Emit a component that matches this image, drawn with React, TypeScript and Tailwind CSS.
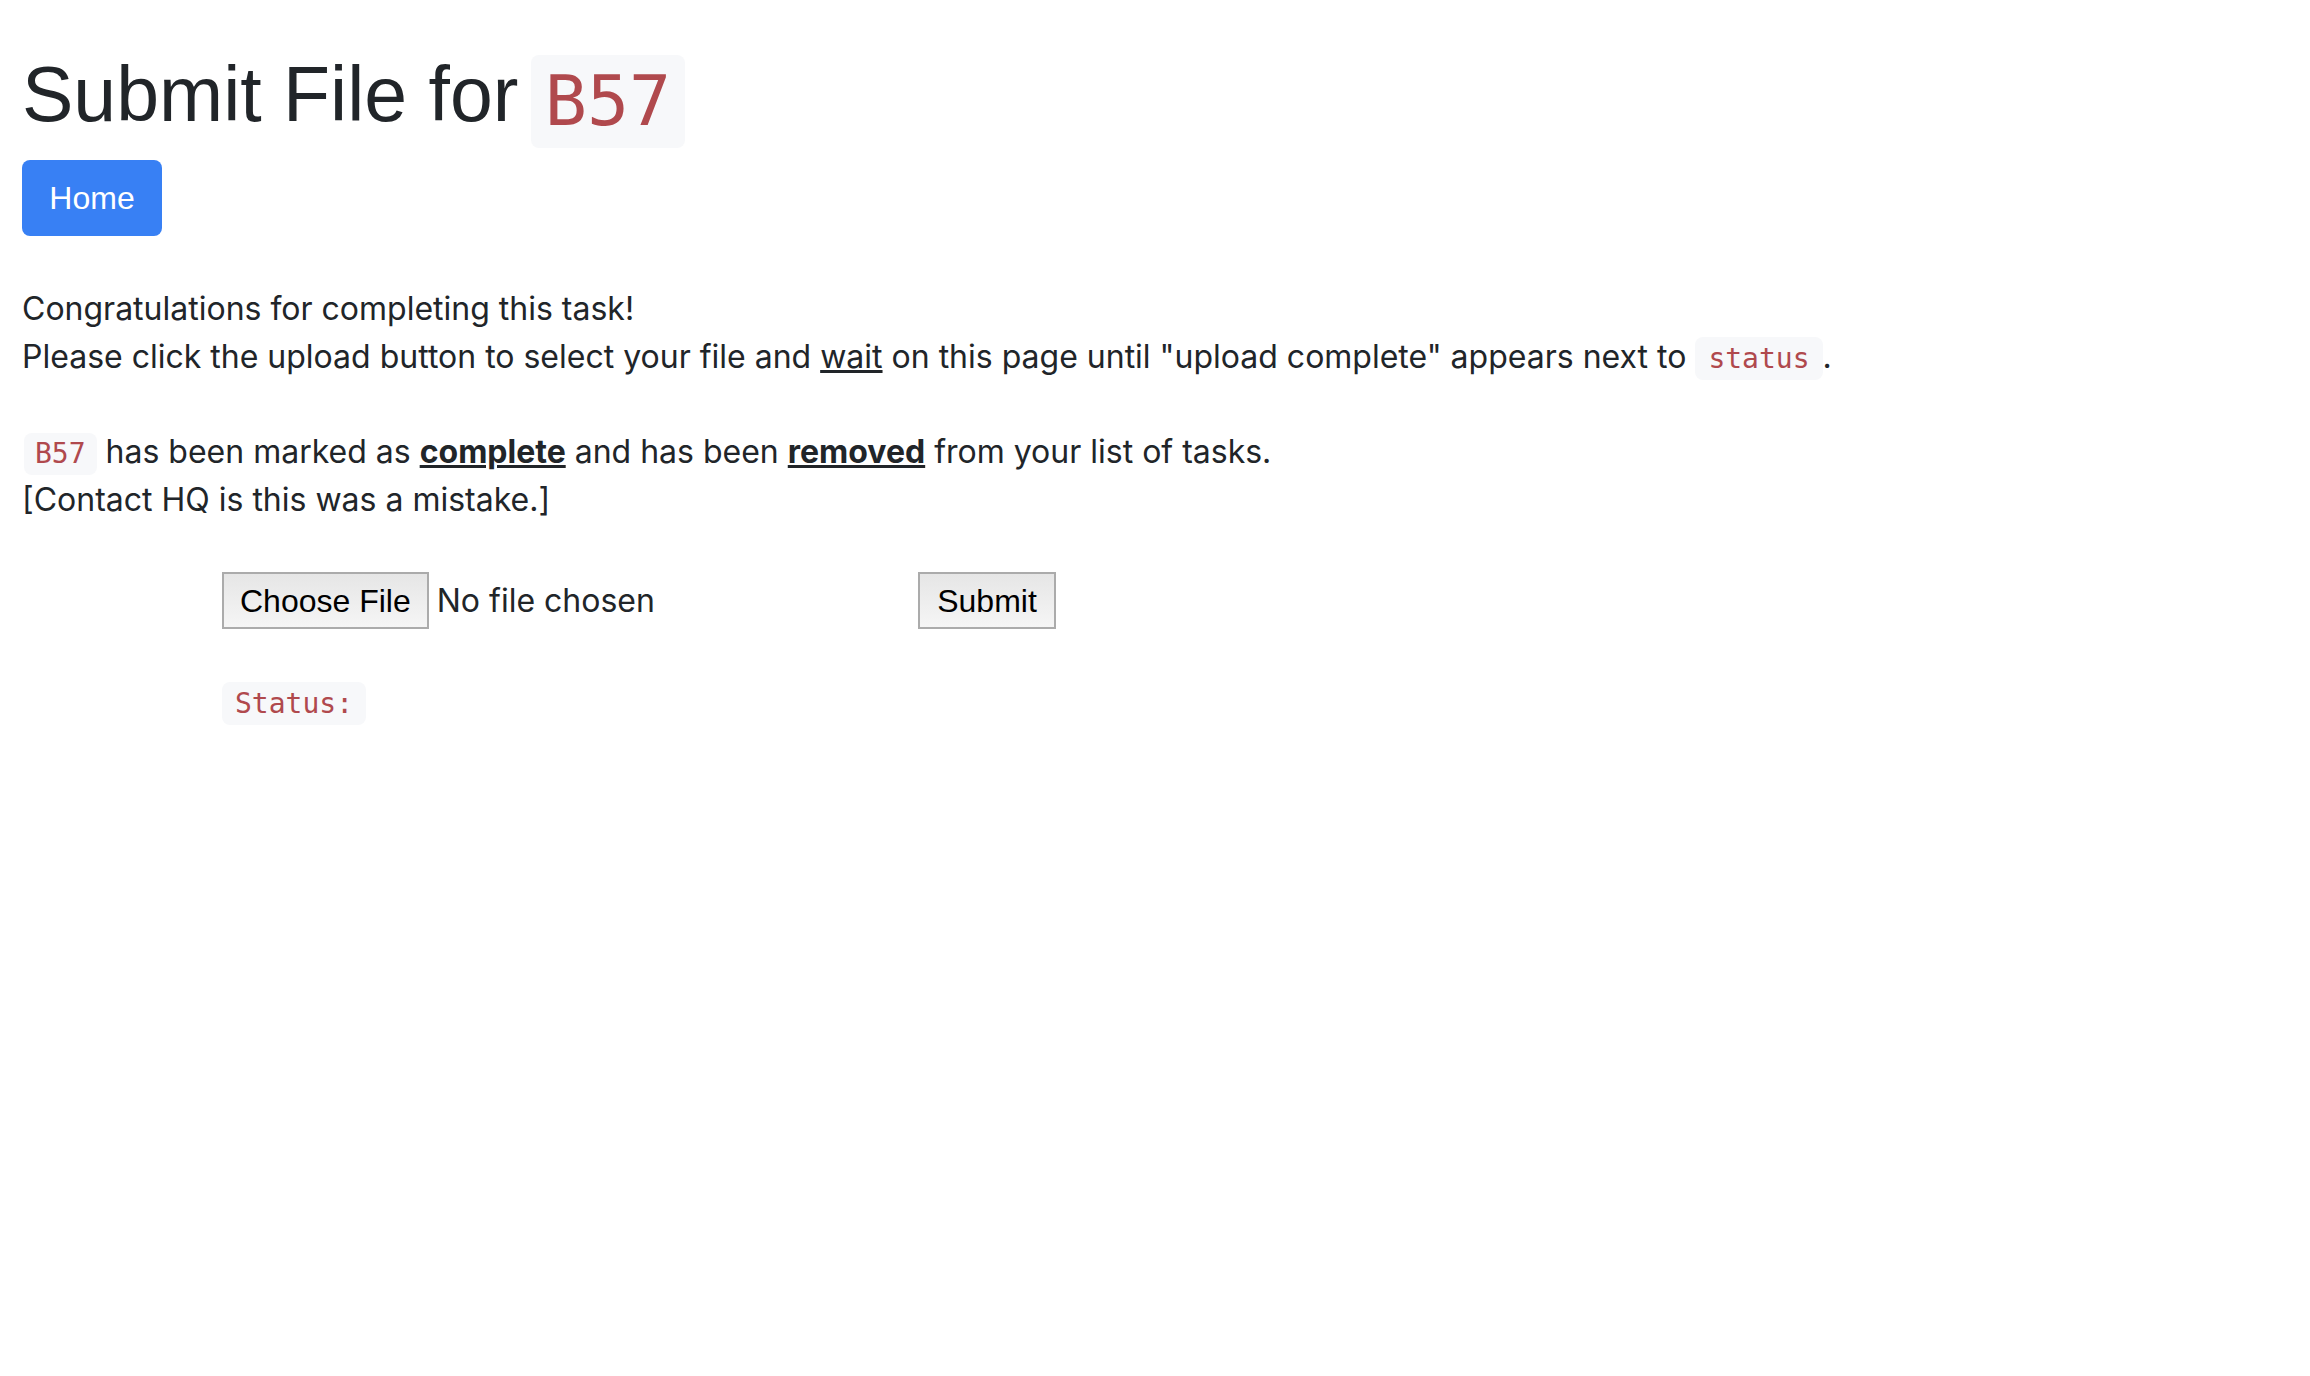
export default function App() {
  const code =
    "inline-block rounded-[8px] bg-[#f7f8fa] text-[#b0494d] font-['DejaVu_Sans_Mono',monospace]"

  return (
    <main className="min-h-screen bg-white text-[#212529] font-['Inter',sans-serif] text-[32px] leading-[48px] pl-[22px] pt-[46px]">
      <h1 className="font-['Liberation_Sans',Arial,sans-serif] text-[77px] leading-[96px] font-normal mb-[12px]">
        Submit File for{' '}
        <code className={`${code} text-[70px] leading-[93px] px-[14px] ml-[-9px] align-[-4px]`}>
          B57
        </code>
      </h1>

      <a
        href="#"
        className="inline-flex items-center justify-center h-[76px] w-[140px] rounded-[8px] bg-[#3880f4] text-white font-['Liberation_Sans',Arial,sans-serif] text-[32px]"
      >
        Home
      </a>

      <div className="mt-[49px]">
        <p>Congratulations for completing this task!</p>
        <p>
          Please click the upload button to select your file and{' '}
          <u>wait</u> on this page until "upload complete" appears next to{' '}
          <code className={`${code} text-[28px] leading-[43px] px-[13px]`}>
            status
          </code>
          .
        </p>
      </div>

      <div className="mt-[47px]">
        <p>
          <code className={`${code} text-[28px] leading-[42px] px-[11px] ml-[2px]`}>
            B57
          </code>{' '}
          has been marked as <b className="underline">complete</b> and has
          been <b className="underline">removed</b> from your list of tasks.
        </p>
        <p>[Contact HQ is this was a mistake.]</p>
      </div>

      <form
        className="mt-[48px] pl-[200px]"
        onSubmit={(e) => e.preventDefault()}
      >
        <div className="flex items-center">
          <input
            type="file"
            className="w-[696px] text-[32px] text-[#212529] font-['Inter',sans-serif] file:h-[57px] file:px-[16px] file:mr-[8px] file:border-2 file:border-[#ababab] file:bg-linear-to-b file:from-[#e6e6e6] file:to-[#f5f5f5] file:text-black file:font-['Liberation_Sans',Arial,sans-serif] file:text-[32px]"
          />
          <button
            type="submit"
            className="h-[57px] w-[138px] border-2 border-[#ababab] bg-linear-to-b from-[#e6e6e6] to-[#f5f5f5] text-black font-['Liberation_Sans',Arial,sans-serif] text-[32px]"
          >
            Submit
          </button>
        </div>

        <div className="mt-[49px]">
          <code className={`${code} text-[28px] leading-[43px] px-[13px]`}>
            Status:
          </code>
        </div>
      </form>
    </main>
  )
}
